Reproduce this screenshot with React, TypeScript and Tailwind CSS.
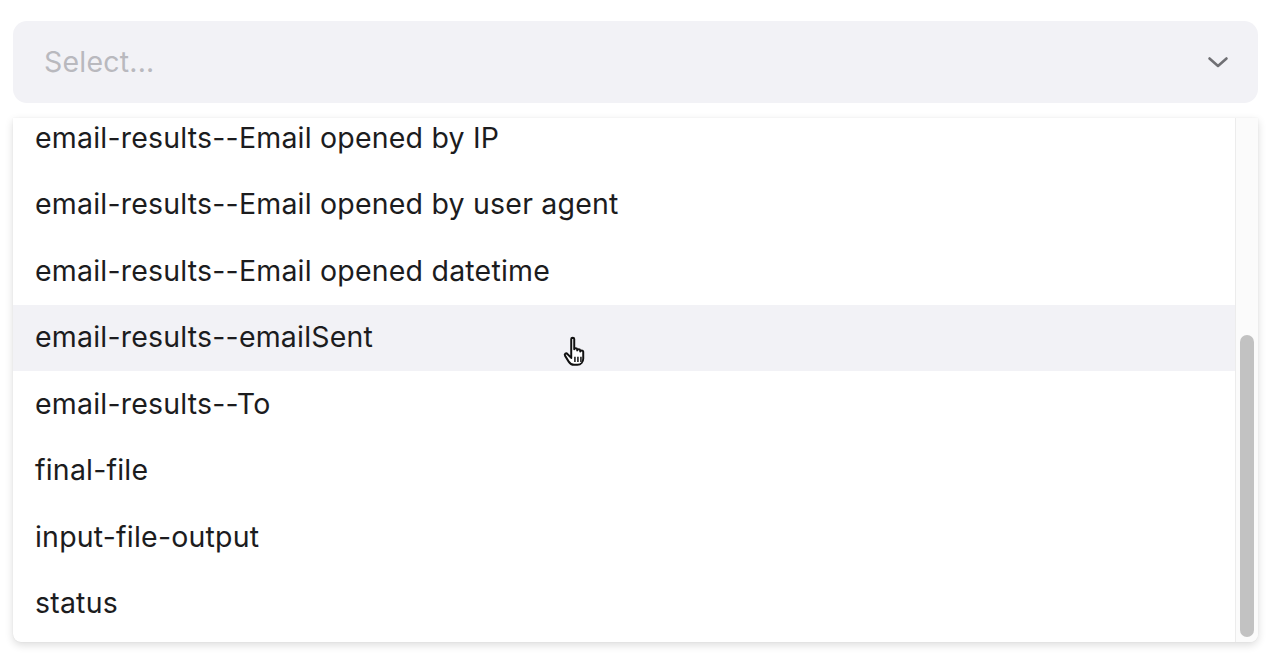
import React from "react";

const items = [
  "email-results--Email opened by IP",
  "email-results--Email opened by user agent",
  "email-results--Email opened datetime",
  "email-results--emailSent",
  "email-results--To",
  "final-file",
  "input-file-output",
  "status",
];

export default function App() {
  return (
    <div
      className="w-[1280px] h-[668px] bg-white overflow-hidden"
      style={{ fontFamily: "Inter, 'Noto Sans', sans-serif" }}
    >
      <div className="pl-[13px] pr-[22px] pt-[21px]">
        <div className="h-[82px] rounded-[14px] bg-[#f2f2f6] flex items-center justify-between pl-[31px] pr-[26px]">
          <span className="text-[28.5px] tracking-[0.2px] text-[#b9b9be]">Select...</span>
          <svg width="28" height="28" viewBox="0 0 28 28" fill="none" className="text-[#707074]">
            <path d="M5.5 10.5l8.5 7.5 8.5-7.5" stroke="currentColor" strokeWidth="2.6" strokeLinecap="round" strokeLinejoin="round" />
          </svg>
        </div>
        <div className="mt-[15px] h-[524px] bg-white rounded-b-[8px] shadow-[0_3px_8px_rgba(0,0,0,0.14),0_0_1px_rgba(0,0,0,0.12)] flex overflow-hidden">
          <div className="flex-1 overflow-hidden pb-[5px]">
            <div className="-mt-[13px]">
              {items.map((t, i) => (
                <div
                  key={t}
                  className={
                    "h-[66.5px] flex items-center pl-[22px] text-[28.5px] tracking-[0.2px] text-[#1c1c1e] relative " +
                    (i === 3 ? "bg-[#f2f2f6]" : "")
                  }
                >
                  {t}
                  {i === 3 && (
                    <svg width="30" height="36" viewBox="0 0 26 30" className="absolute left-[549px] top-[28px]">
                      <path
                        d="M8 4.5c0-1.4 2.6-1.4 2.6 0v9c.2-1.3 2.4-1.3 2.6 0v1c.2-1.3 2.4-1.3 2.6 0v1c.2-1.2 2.4-1.2 2.6 0v6c0 3-2 5.5-5 5.5h-3c-2.2 0-3.5-1-4.6-2.8L2.6 19c-.8-1.4 1-2.6 2.1-1.4L8 21V4.5z"
                        fill="white"
                        stroke="#111"
                        strokeWidth="1.7"
                        strokeLinejoin="round"
                      />
                      <path d="M11.2 20v4.5M13.8 20v4.5M16.4 20v4.5" stroke="#111" strokeWidth="1.3" />
                    </svg>
                  )}
                </div>
              ))}
            </div>
          </div>
          <div className="w-[23px] border-l border-[#ececec] bg-[#fbfbfb] pt-[217px] pb-[5px] flex justify-center">
            <div className="w-[14px] h-[302px] rounded-full bg-[#c2c2c2]" />
          </div>
        </div>
      </div>
    </div>
  );
}
